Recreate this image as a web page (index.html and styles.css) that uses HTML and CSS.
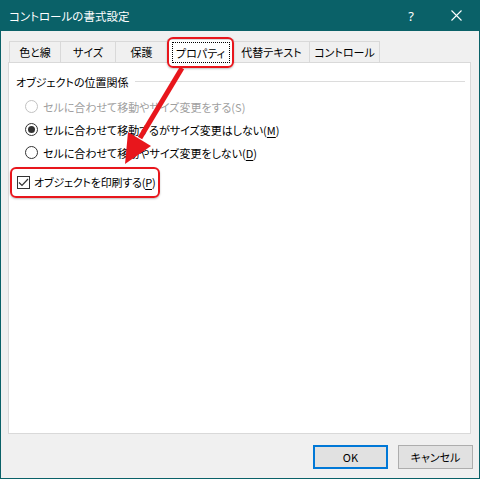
FILE: index.html
```html
<!DOCTYPE html>
<html lang="ja">
<head>
    <meta charset="UTF-8">
    <title>コントロールの書式設定</title>
    <link rel="stylesheet" href="styles.css">
</head>
<body>
    <div class="window">
        <div class="titlebar">
            <span class="title">コントロールの書式設定</span>
            <span class="help">?</span>
            <span class="close">
                <svg width="11" height="11" viewBox="0 0 11 11"><path d="M0.5 0.5 L10.5 10.5 M10.5 0.5 L0.5 10.5" stroke="#fff" stroke-width="1.1"/></svg>
            </span>
        </div>

        <div class="client">
            <div class="tabs">
                <div class="tab t1">色と線</div>
                <div class="tab t2">サイズ</div>
                <div class="tab t3">保護</div>
                <div class="tab t4 active"><span class="focus">プロパティ</span></div>
                <div class="tab t5">代替テキスト</div>
                <div class="tab t6">コントロール</div>
            </div>

            <div class="panel">
                <div class="group-head">
                    <span>オブジェクトの位置関係</span>
                    <div class="rule"></div>
                </div>
                <div class="options">
                    <div class="opt disabled"><span class="radio"></span><span>セルに合わせて移動やサイズ変更をする(S)</span></div>
                    <div class="opt"><span class="radio on"></span><span>セルに合わせて移動するがサイズ変更はしない(<u>M</u>)</span></div>
                    <div class="opt"><span class="radio"></span><span>セルに合わせて移動やサイズ変更をしない(<u>D</u>)</span></div>
                </div>
                <div class="check">
                    <span class="box">
                        <svg width="11" height="11" viewBox="0 0 11 11"><path d="M1 5.5 L4 8.5 L10 2" fill="none" stroke="#333" stroke-width="1.2"/></svg>
                    </span>
                    <span>オブジェクトを印刷する(<u>P</u>)</span>
                </div>
            </div>

            <div class="buttons">
                <button class="btn default">OK</button>
                <button class="btn">キャンセル</button>
            </div>
        </div>

        <!-- 注釈 -->
        <div class="mark mark-tab"></div>
        <div class="mark mark-check"></div>
        <svg class="arrow" width="480" height="479" viewBox="0 0 480 479">
            <line x1="182" y1="68" x2="140" y2="138" stroke="#e8161c" stroke-width="5"/>
            <polygon points="125,164 128,132 151,146" fill="#e8161c"/>
        </svg>
    </div>
</body>
</html>
```

FILE: styles.css
```css
body {
    margin: 0;
    font-family: "Noto Sans CJK JP", "Noto Sans", sans-serif;
    font-size: 11px;
    font-feature-settings: "palt";
    color: #000;
}
.window {
    position: relative;
    width: 480px;
    height: 479px;
}
.titlebar {
    height: 31px;
    background: #0a6168;
    color: #fff;
    display: flex;
    align-items: center;
    padding-left: 9px;
    font-size: 11.5px;
}
.title {
    flex: 1;
    line-height: 16px;
}
.help {
    width: 20px;
    text-align: center;
    font-family: "Noto Sans", sans-serif;
    font-size: 13px;
    margin-right: 30px;
}
.close {
    width: 11px;
    height: 11px;
    margin-right: 18px;
    display: flex;
}
.client {
    height: 447px;
    background: #f0f0f0;
    border: 1px solid #0a6168;
    border-top: none;
    display: flex;
    flex-direction: column;
}
.tabs {
    display: flex;
    align-items: flex-end;
    height: 23px;
    margin: 8px 0 0 8px;
}
.tab {
    height: 21px;
    border: 1px solid #d9d9d9;
    border-bottom: none;
    margin-left: -1px;
    background: #f0f0f0;
    display: flex;
    align-items: center;
    justify-content: center;
    line-height: 16px;
    box-sizing: border-box;
    white-space: nowrap;
}
.t1 { width: 52px; margin-left: 0; }
.t2 { width: 56px; }
.t3 { width: 53px; }
.t4 { width: 67px; }
.t5 { width: 77px; }
.t6 { width: 71px; }
.tab.active {
    height: 24px;
    margin-bottom: -1px;
    background: #fff;
    position: relative;
    z-index: 1;
    align-items: flex-start;
    padding-top: 2px;
}
.focus {
    border: 1px dotted #000;
    width: 58px;
    height: 21px;
    box-sizing: border-box;
    display: flex;
    align-items: center;
    justify-content: center;
}
.panel {
    margin-left: 7px;
    width: 463px;
    height: 372px;
    box-sizing: border-box;
    background: #fff;
    border: 1px solid #d9d9d9;
    padding: 11px 5px 0 7px;
}
.group-head {
    display: flex;
    align-items: center;
    gap: 6px;
    line-height: 16px;
}
.rule {
    flex: 1;
    height: 1px;
    background: #dcdcdc;
    margin-top: -1px;
}
.options {
    margin: 5px 0 0 9px;
}
.opt {
    display: flex;
    align-items: center;
    gap: 5px;
    height: 23px;
}
.opt.disabled {
    color: #a0a0a0;
}
.radio {
    width: 13px;
    height: 13px;
    box-sizing: border-box;
    border: 1px solid #333;
    border-radius: 50%;
    background: #fff;
    display: flex;
    align-items: center;
    justify-content: center;
}
.opt.disabled .radio {
    border-color: #c2c2c2;
}
.radio.on::after {
    content: "";
    width: 7px;
    height: 7px;
    border-radius: 50%;
    background: #333;
}
.check {
    display: flex;
    align-items: center;
    gap: 4px;
    height: 24px;
    margin: 6px 0 0 1px;
    letter-spacing: -0.2px;
}
.box {
    width: 13px;
    height: 13px;
    box-sizing: border-box;
    border: 1px solid #333;
    display: flex;
    align-items: center;
    justify-content: center;
}
u {
    text-decoration-thickness: 1px;
    text-underline-offset: 2px;
}
.buttons {
    display: flex;
    justify-content: flex-end;
    gap: 10px;
    margin: 11px 6px 0 0;
}
.btn {
    width: 75px;
    height: 24px;
    background: #e1e1e1;
    border: 1px solid #adadad;
    font: inherit;
    font-feature-settings: "palt";
    padding: 0;
    color: #000;
}
.btn.default {
    border: 2px solid #0078d7;
}
.mark {
    position: absolute;
    border: 2px solid #e8161c;
    border-radius: 6px;
    box-shadow: 0 1px 2px rgba(0, 0, 0, 0.25);
    box-sizing: border-box;
    z-index: 2;
}
.mark-tab {
    left: 167px;
    top: 37px;
    width: 67px;
    height: 31px;
}
.mark-check {
    left: 10px;
    top: 167px;
    width: 150px;
    height: 31px;
}
.arrow {
    position: absolute;
    left: 0;
    top: 0;
    z-index: 3;
}
```
